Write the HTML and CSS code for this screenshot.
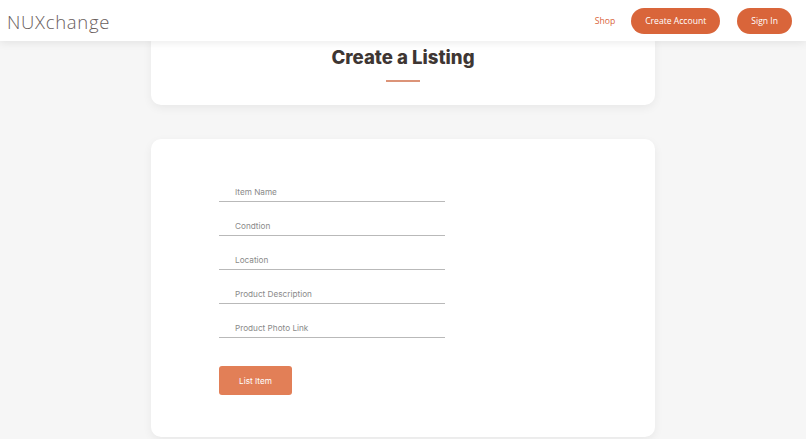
FILE: index.html
```html
<!DOCTYPE html>
<html lang="en">
<head>
<meta charset="utf-8">
<title>NUXchange - Create a Listing</title>
<link rel="stylesheet" href="styles.css">
</head>
<body>
<header class="topbar">
  <a class="logo" href="#">NUXchange</a>
  <nav class="nav">
    <a class="nav-link" href="#">Shop</a>
    <a class="pill" href="#">Create Account</a>
    <a class="pill" href="#">Sign In</a>
  </nav>
</header>
<main class="page">
  <section class="card card-title">
    <h1 class="title">Create a Listing</h1>
    <div class="title-rule"></div>
  </section>
  <section class="card card-form">
    <form class="form">
      <input class="field" type="text" placeholder="Item Name">
      <input class="field" type="text" placeholder="Condtion">
      <input class="field" type="text" placeholder="Location">
      <input class="field" type="text" placeholder="Product Description">
      <input class="field" type="text" placeholder="Product Photo Link">
      <button class="submit" type="button">List Item</button>
    </form>
  </section>
</main>
</body>
</html>
```

FILE: styles.css
```css
* { box-sizing: border-box; }
html, body { margin: 0; padding: 0; }
body {
  background: #f6f6f6;
  font-family: "Open Sans", "Liberation Sans", sans-serif;
  height: 439px;
  overflow: hidden;
}
.topbar {
  position: sticky;
  top: 0;
  z-index: 10;
  height: 41px;
  background: #ffffff;
  display: flex;
  align-items: center;
  justify-content: space-between;
  padding: 1px 14px 0 7px;
  box-shadow: 0 2px 8px rgba(0,0,0,0.08);
}
.logo {
  font-family: "Open Sans", "Noto Sans", sans-serif;
  font-weight: 300;
  font-size: 18.5px;
  color: #6a605d;
  text-decoration: none;
  letter-spacing: 0.7px;
}
.nav {
  display: flex;
  align-items: center;
  gap: 17px;
}
.nav-link {
  font-size: 8.6px;
  color: #d9653a;
  text-decoration: none;
  margin-right: -1px;
}
.pill {
  height: 26px;
  display: flex;
  align-items: center;
  padding: 0 14px;
  border-radius: 13px;
  background: #d9653a;
  color: #fff;
  font-size: 8.6px;
  text-decoration: none;
}
.page {
  display: flex;
  flex-direction: column;
  align-items: center;
}
.card {
  width: 504px;
  background: #fff;
  border-radius: 10px;
  box-shadow: 0 3px 10px rgba(0,0,0,0.06);
}
.card-title {
  margin-top: -9px;
  padding: 13px 0 23px;
  display: flex;
  flex-direction: column;
  align-items: center;
}
.title {
  margin: 0;
  font-family: "Inter", "Lato", sans-serif;
  font-weight: 800;
  font-size: 18.6px;
  line-height: 24px;
  color: #3e3633;
}
.title-rule {
  width: 34px;
  height: 2px;
  background: #dc9478;
  margin-top: 11px;
}
.card-form {
  margin-top: 34px;
  height: 298px;
  padding: 41px 0 0 68px;
}
.form {
  display: flex;
  flex-direction: column;
  gap: 12px;
  width: 226px;
}
.field {
  height: 22px;
  border: 0;
  border-bottom: 1px solid #b9b9b9;
  padding: 3px 0 0 16px;
  font-family: "Inter", "Noto Sans", sans-serif;
  font-size: 8.2px;
  color: #555;
  background: transparent;
  outline: none;
}
.field::placeholder { color: #8a8a8a; }
.submit {
  margin-top: 16px;
  width: 73px;
  height: 29px;
  border: 0;
  border-radius: 3px;
  background: #e27f57;
  color: #fff;
  font-family: "Inter", "Noto Sans", sans-serif;
  font-size: 8.2px;
  padding: 0;
}
```
